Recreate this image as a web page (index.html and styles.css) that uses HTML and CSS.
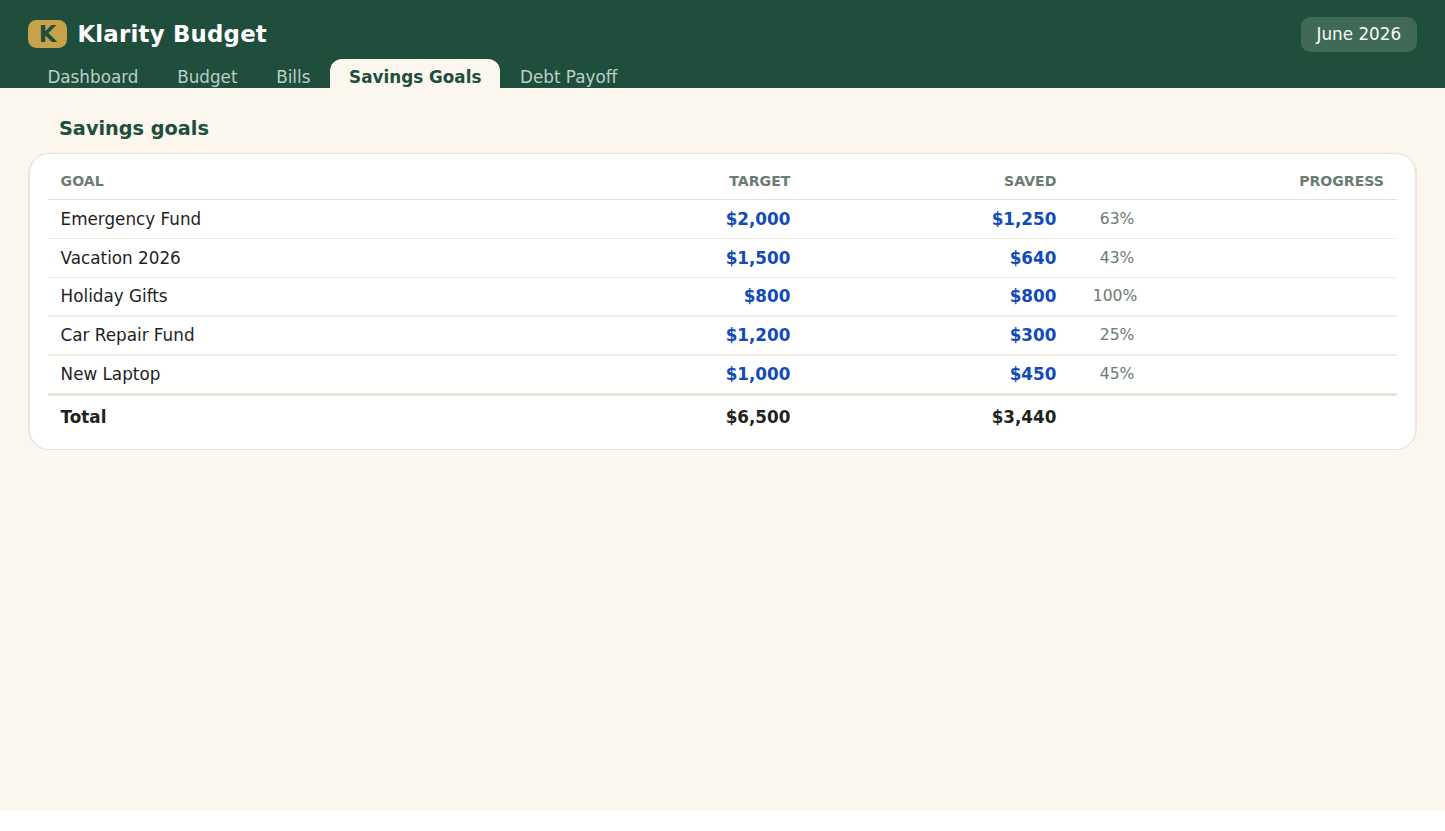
FILE: index.html
```html
<!DOCTYPE html>
<html lang="en">
<head>
    <meta charset="UTF-8">
    <title>Klarity Budget</title>
    <link rel="stylesheet" href="styles.css">
</head>
<body>
<header class="topbar">
    <div class="brand-row">
        <div class="brand">
            <span class="logo">K</span>
            <span class="brand-name">Klarity Budget</span>
        </div>
        <div class="month">June 2026</div>
    </div>
    <nav class="tabs">
        <a class="tab">Dashboard</a>
        <a class="tab">Budget</a>
        <a class="tab">Bills</a>
        <a class="tab active">Savings Goals</a>
        <a class="tab">Debt Payoff</a>
    </nav>
</header>
<main class="page">
    <h2>Savings goals</h2>
    <div class="card">
        <table>
            <colgroup>
                <col class="col-goal">
                <col class="col-amount">
                <col class="col-amount">
                <col>
            </colgroup>
            <thead>
                <tr><th>Goal</th><th class="num">Target</th><th class="num">Saved</th><th class="num">Progress</th></tr>
            </thead>
            <tbody>
                <tr><td>Emergency Fund</td><td class="num input">$2,000</td><td class="num input">$1,250</td><td><span class="pct">63%</span></td></tr>
                <tr><td>Vacation 2026</td><td class="num input">$1,500</td><td class="num input">$640</td><td><span class="pct">43%</span></td></tr>
                <tr><td>Holiday Gifts</td><td class="num input">$800</td><td class="num input">$800</td><td><span class="pct full">100%</span></td></tr>
                <tr><td>Car Repair Fund</td><td class="num input">$1,200</td><td class="num input">$300</td><td><span class="pct">25%</span></td></tr>
                <tr><td>New Laptop</td><td class="num input">$1,000</td><td class="num input">$450</td><td><span class="pct">45%</span></td></tr>
            </tbody>
            <tfoot>
                <tr><td>Total</td><td class="num">$6,500</td><td class="num">$3,440</td><td></td></tr>
            </tfoot>
        </table>
    </div>
</main>
</body>
</html>
```

FILE: styles.css
```css
* { box-sizing: border-box; }
html {
    background: #fff;
}
body {
    margin: 0;
    font-family: "DejaVu Sans", Verdana, sans-serif;
    font-size: 16.8px;
    color: #1f231c;
}
.topbar {
    height: 88px;
    padding: 16px 28.4px 0 28.4px;
    background: #204e3d;
    color: #fff;
    display: flex;
    flex-direction: column;
    justify-content: space-between;
    overflow: hidden;
}
.brand-row {
    display: flex;
    justify-content: space-between;
    align-items: center;
    height: 36px;
}
.brand {
    display: flex;
    align-items: center;
    gap: 10.5px;
    font-size: 22.8px;
    font-weight: bold;
    letter-spacing: 0.24px;
}
.logo {
    width: 38.5px;
    height: 28.5px;
    line-height: 28.5px;
    border-radius: 8.4px;
    background: #c8a24a;
    color: #204e3d;
    text-align: center;
}
.month {
    height: 35px;
    line-height: 34px;
    padding: 0 15.5px;
    border-radius: 9.6px;
    background: #416958;
    color: #f7faf8;
}
.tabs {
    display: flex;
    gap: 0.7px;
}
.tab {
    height: 29px;
    padding: 0 19px;
    line-height: 37px;
    color: #b9d0c5;
    border-radius: 12px 12px 0 0;
}
.tab.active {
    background: #fbf6ee;
    color: #204e3d;
    font-weight: bold;
}
.page {
    height: 723px;
    padding: 27px 28.4px 0 28.4px;
    background: #fbf6ee;
}
h2 {
    margin: 0 0 11px 30.6px;
    font-size: 19.3px;
    line-height: 27px;
    color: #204e3d;
}
.card {
    height: 297px;
    padding: 9px 17.4px 0 17.6px;
    background: #fff;
    border: 1px solid #e9e2d5;
    border-left: 2px solid #ece6da;
    border-right: 2px solid #ece6da;
    border-radius: 21px;
}
table {
    width: 100%;
    table-layout: fixed;
    border-collapse: separate;
    border-spacing: 0;
}
.col-goal { width: 489px; }
.col-amount { width: 266px; }
th, td {
    height: 39px;
    padding: 0 12.6px;
    text-align: left;
    border-bottom: 1px solid #f1eadd;
}
th {
    height: 37px;
    font-size: 14.1px;
    color: #6b7c72;
    text-transform: uppercase;
    border-bottom-color: #e5e1d4;
}
th:last-child {
    padding-right: 13.2px;
}
.num {
    text-align: right;
}
.input {
    color: #124bb7;
    font-weight: bold;
}
.pct {
    display: block;
    width: 71px;
    text-align: center;
    font-size: 15.6px;
    color: #6b7c72;
}
.pct.full {
    width: 67px;
}
tbody tr:nth-child(n+3) td {
    padding-bottom: 1px;
    border-bottom: 2px solid #f3ede2;
}
tbody tr:last-child td {
    height: 40px;
    padding-bottom: 2px;
    border-bottom: 3px solid #ebe4d8;
}
tfoot td {
    height: 42px;
    font-weight: bold;
    border-bottom: none;
}
```
